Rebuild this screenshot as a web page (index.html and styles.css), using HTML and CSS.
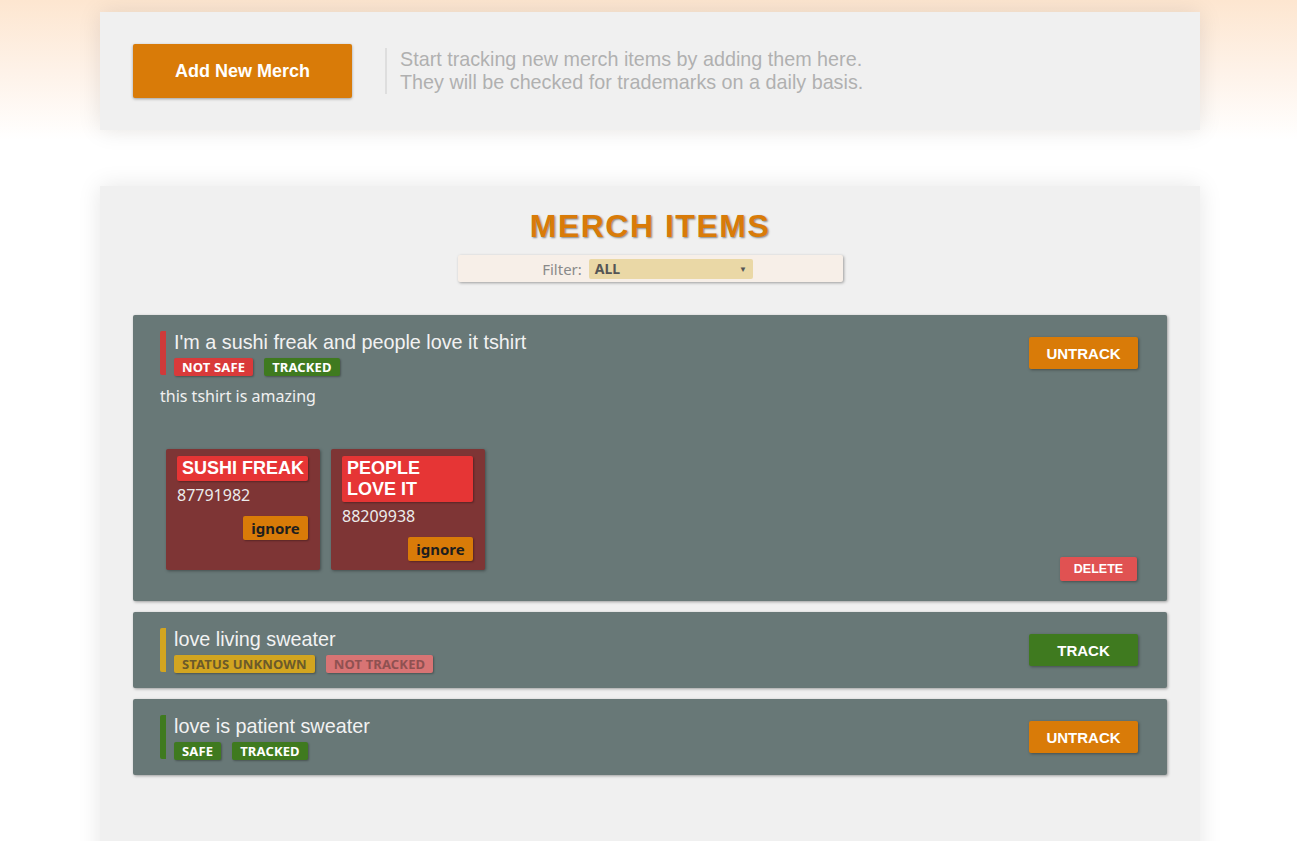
FILE: index.html
```html
<!DOCTYPE html>
<html>
<head>
<meta charset="utf-8">
<link rel="stylesheet" href="styles.css">
</head>
<body>
<div class="page">
  <section class="panel add-panel">
    <button class="add-btn">Add New Merch</button>
    <div class="add-text">
      Start tracking new merch items by adding them here.<br>
      They will be checked for trademarks on a daily basis.
    </div>
  </section>

  <section class="panel list-panel">
    <h1 class="list-title">MERCH ITEMS</h1>
    <div class="filter-bar">
      <span class="filter-label">Filter:</span>
      <div class="filter-select"><span>ALL</span><span class="arrow">&#9660;</span></div>
    </div>

    <div class="items">
      <div class="item">
        <div class="item-head">
          <div class="item-main bar-red">
            <div class="item-title">I'm a sushi freak and people love it tshirt</div>
            <div class="badges">
              <span class="badge b-red">NOT SAFE</span>
              <span class="badge b-green">TRACKED</span>
            </div>
          </div>
          <button class="act-btn act-orange">UNTRACK</button>
        </div>
        <div class="item-desc">this tshirt is amazing</div>
        <div class="item-foot">
          <div class="marks">
            <div class="mark">
              <div class="mark-name">SUSHI FREAK</div>
              <div class="mark-num">87791982</div>
              <div class="mark-actions"><button class="ignore-btn">ignore</button></div>
            </div>
            <div class="mark">
              <div class="mark-name">PEOPLE LOVE IT</div>
              <div class="mark-num">88209938</div>
              <div class="mark-actions"><button class="ignore-btn">ignore</button></div>
            </div>
          </div>
          <button class="delete-btn">DELETE</button>
        </div>
      </div>

      <div class="item">
        <div class="item-head">
          <div class="item-main bar-yellow">
            <div class="item-title">love living sweater</div>
            <div class="badges">
              <span class="badge b-yellow">STATUS UNKNOWN</span>
              <span class="badge b-pink">NOT TRACKED</span>
            </div>
          </div>
          <button class="act-btn act-green">TRACK</button>
        </div>
      </div>

      <div class="item">
        <div class="item-head">
          <div class="item-main bar-green">
            <div class="item-title">love is patient sweater</div>
            <div class="badges">
              <span class="badge b-green">SAFE</span>
              <span class="badge b-green">TRACKED</span>
            </div>
          </div>
          <button class="act-btn act-orange">UNTRACK</button>
        </div>
      </div>
    </div>
  </section>
</div>
</body>
</html>
```

FILE: styles.css
```css
html, body {
  margin: 0;
  padding: 0;
}
body {
  background: linear-gradient(to bottom, #fde6d0 0px, #fef2e8 70px, #ffffff 140px) no-repeat;
  background-color: #ffffff;
  font-family: "Liberation Sans", Arial, sans-serif;
  min-height: 841px;
}
.page {
  width: 1100px;
  margin: 0 auto;
  padding: 12px 0 0 3px;
}
.panel {
  background: #f0f0f0;
  box-shadow: 0 0 22px rgba(0, 0, 0, 0.10);
}
.add-panel {
  display: flex;
  align-items: center;
  padding: 32px 33px;
  height: 54px;
}
.add-btn {
  width: 219px;
  height: 54px;
  background: #d97b08;
  color: #fff;
  border: none;
  border-radius: 2px;
  font-family: "Liberation Sans", Arial, sans-serif;
  font-weight: bold;
  font-size: 18px;
  box-shadow: 0 1px 3px rgba(0,0,0,0.35);
  padding: 0;
}
.add-text {
  margin-left: 33px;
  border-left: 2px solid #dedede;
  padding: 0 0 0 13px;
  color: #b0b0b0;
  font-size: 19.75px;
  line-height: 23px;
}
.list-panel {
  margin-top: 56px;
  padding: 22px 33px 120px;
}
.list-title {
  margin: 0;
  text-align: center;
  color: #d97b08;
  font-size: 32px;
  font-weight: bold;
  letter-spacing: 1.5px;
  line-height: 37px;
  text-shadow: 1px 1px 2px rgba(0,0,0,0.45);
}
.filter-bar {
  width: 385px;
  height: 27px;
  margin: 10px auto 0;
  background: #f7efe8;
  box-shadow: 1px 1px 3px rgba(0,0,0,0.35);
  border-radius: 2px;
  display: flex;
  align-items: center;
  justify-content: center;
  font-family: "Noto Sans", "Open Sans", sans-serif;
  padding-right: 5px;
  box-sizing: border-box;
}
.filter-label {
  color: #8a8a8a;
  font-size: 15px;
  margin-right: 7px;
}
.filter-select {
  width: 164px;
  height: 20px;
  background: #ead8a6;
  border-radius: 2px;
  display: flex;
  align-items: center;
  justify-content: space-between;
  padding: 0 6px;
  box-sizing: border-box;
  color: #555;
  font-weight: bold;
  font-size: 14px;
}
.filter-select .arrow {
  font-size: 8px;
  color: #555;
}
.items {
  margin-top: 33px;
  display: flex;
  flex-direction: column;
  gap: 11px;
}
.item {
  background: #687877;
  border-radius: 2px;
  box-shadow: 1px 1px 3px rgba(0,0,0,0.35);
  padding: 16px 29px 16px 27px;
}
.item-head {
  display: flex;
  align-items: center;
  justify-content: space-between;
}
.item-main {
  border-left: 6px solid;
  border-radius: 2px 0 0 2px;
  padding-left: 8px;
  height: 44px;
}
.bar-red { border-color: #cf3a3a; }
.bar-yellow { border-color: #d2a520; }
.bar-green { border-color: #3f7a1f; }
.item-title {
  color: #f2f2f2;
  font-size: 19.8px;
  line-height: 22px;
  margin-top: 0;
}
.badges {
  display: flex;
  gap: 11px;
  margin-top: 5px;
}
.badge {
  height: 18px;
  line-height: 18px;
  padding: 0 8px;
  border-radius: 2px;
  font-family: "Noto Sans", "Open Sans", sans-serif;
  font-weight: bold;
  font-size: 13px;
  letter-spacing: 0.15px;
  box-shadow: 1px 1px 2px rgba(0,0,0,0.3);
  color: #fff;
}
.b-red { background: #d93a3a; }
.b-green { background: #3f7a1f; }
.b-yellow { background: #d2a520; color: #6b5a2a; }
.b-pink { background: #d87474; color: #8f5151; }
.act-btn {
  width: 109px;
  height: 32px;
  border: none;
  border-radius: 2px;
  color: #fff;
  font-family: "Liberation Sans", Arial, sans-serif;
  font-weight: bold;
  font-size: 15px;
  box-shadow: 1px 1px 3px rgba(0,0,0,0.35);
  padding: 0;
}
.act-orange { background: #d97b08; }
.act-green { background: #3f7a1f; }
.item-desc {
  color: #f0f0f0;
  font-family: "Noto Sans", "Open Sans", sans-serif;
  font-size: 16px;
  margin-top: 10px;
  line-height: 22px;
}
.item-foot {
  display: flex;
  justify-content: space-between;
  align-items: flex-end;
  margin-top: 42px;
  margin-right: 1px;
  margin-bottom: 4px;
}
.marks {
  display: flex;
  gap: 11px;
  align-items: flex-start;
  margin-left: 6px;
  margin-bottom: 11px;
}
.mark {
  width: 154px;
  height: 121px;
  box-sizing: border-box;
  background: #7e3535;
  border-radius: 2px;
  box-shadow: 1px 1px 3px rgba(0,0,0,0.35);
  padding: 7px 12px 0 11px;
}
.mark-name {
  background: #e63535;
  color: #fff;
  font-weight: bold;
  font-size: 18px;
  line-height: 21px;
  padding: 2px 4px 2px 5px;
  border-radius: 2px;
  box-shadow: 1px 1px 2px rgba(0,0,0,0.3);
}
.mark-num {
  color: #ececec;
  font-family: "Noto Sans", "Open Sans", sans-serif;
  font-size: 16px;
  margin-top: 3px;
  line-height: 22px;
}
.mark-actions {
  display: flex;
  justify-content: flex-end;
  margin-top: 10px;
}
.ignore-btn {
  width: 65px;
  height: 24px;
  background: #d97b08;
  border: none;
  border-radius: 2px;
  color: #1e1e1e;
  font-family: "Noto Sans", "Open Sans", sans-serif;
  font-weight: bold;
  font-size: 15px;
  padding: 0;
  box-shadow: 1px 1px 2px rgba(0,0,0,0.3);
}
.delete-btn {
  width: 77px;
  height: 24px;
  background: #e05252;
  border: none;
  border-radius: 2px;
  color: #fff;
  font-family: "Liberation Sans", Arial, sans-serif;
  font-weight: bold;
  font-size: 12.5px;
  padding: 0;
  box-shadow: 1px 1px 3px rgba(0,0,0,0.35);
}
```
